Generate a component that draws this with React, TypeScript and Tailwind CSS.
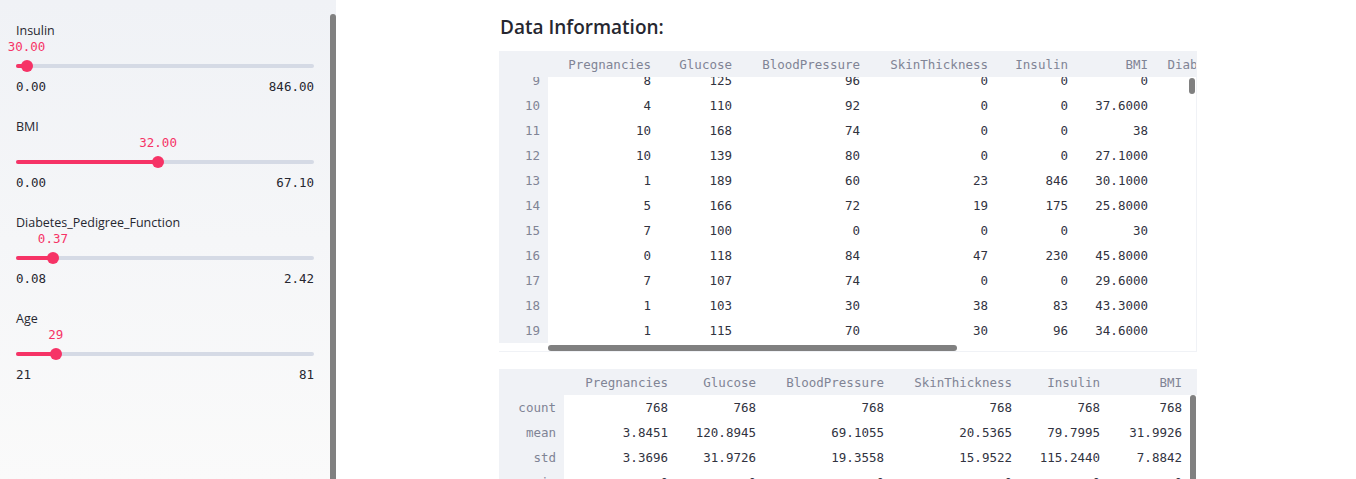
import React from 'react'

const sans = { fontFamily: '"Open Sans", "Noto Sans", sans-serif' }
const mono = { fontFamily: '"DejaVu Sans Mono", "Liberation Mono", monospace' }

type SliderProps = {
  label: string
  value: string
  min: string
  max: string
  pct: number
}

function Slider({ label, value, min, max, pct }: SliderProps) {
  const left = `${pct * 100}%`
  return (
    <div className="h-[96px] pt-[22px]">
      <div className="text-[12.5px] leading-[18px] text-[#262730]" style={sans}>
        {label}
      </div>
      <div className="relative mt-[-1px] h-[40px]">
        <div
          className="absolute top-0 -translate-x-1/2 text-[12.5px] leading-[16px] text-[#f63366]"
          style={{ ...mono, left }}
        >
          {value}
        </div>
        <div className="absolute left-0 right-0 top-[25px] h-[4px] rounded-full bg-[#d5dae5]" />
        <div
          className="absolute left-0 top-[25px] h-[4px] rounded-full bg-[#f63366]"
          style={{ width: left }}
        />
        <div
          className="absolute top-[21px] h-[12px] w-[12px] -translate-x-1/2 rounded-full bg-[#f63366]"
          style={{ left }}
        />
      </div>
      <div className="flex justify-between text-[12.5px] leading-[16px] text-[#262730]" style={mono}>
        <span>{min}</span>
        <span>{max}</span>
      </div>
    </div>
  )
}

const cols1 = ['Pregnancies', 'Glucose', 'BloodPressure', 'SkinThickness', 'Insulin', 'BMI', 'DiabetesPedigreeFunction']
const widths1 = [49, 111, 81, 128, 128, 80, 80, 200]
const rows1: (string | number)[][] = [
  [9, 8, 125, 96, 0, 0, '0', '2.2880'],
  [10, 4, 110, 92, 0, 0, '37.6000', '0.1910'],
  [11, 10, 168, 74, 0, 0, '38', '0.5370'],
  [12, 10, 139, 80, 0, 0, '27.1000', '1.4410'],
  [13, 1, 189, 60, 23, 846, '30.1000', '0.3980'],
  [14, 5, 166, 72, 19, 175, '25.8000', '0.5870'],
  [15, 7, 100, 0, 0, 0, '30', '0.4840'],
  [16, 0, 118, 84, 47, 230, '45.8000', '0.5510'],
  [17, 7, 107, 74, 0, 0, '29.6000', '0.2540'],
  [18, 1, 103, 30, 38, 83, '43.3000', '0.1830'],
  [19, 1, 115, 70, 30, 96, '34.6000', '0.5290'],
]

const cols2 = ['Pregnancies', 'Glucose', 'BloodPressure', 'SkinThickness', 'Insulin', 'BMI']
const widths2 = [65, 112, 88, 128, 128, 88, 82]
const rows2: string[][] = [
  ['count', '768', '768', '768', '768', '768', '768'],
  ['mean', '3.8451', '120.8945', '69.1055', '20.5365', '79.7995', '31.9926'],
  ['std', '3.3696', '31.9726', '19.3558', '15.9522', '115.2440', '7.8842'],
  ['min', '0', '0', '0', '0', '0', '0'],
]

function Cell({ w, children, index, head }: { w: number; children: React.ReactNode; index?: boolean; head?: boolean }) {
  return (
    <div
      className={`shrink-0 overflow-hidden whitespace-nowrap px-[8px] text-right ${
        index ? 'bg-[#f0f2f6] text-[#808495]' : head ? 'text-[#808495]' : 'text-[#31333f]'
      }`}
      style={{ width: w }}
    >
      {children}
    </div>
  )
}

function HeaderRow({ cols, widths }: { cols: string[]; widths: number[] }) {
  return (
    <div className="flex h-[26px] items-center bg-[#f0f2f6]">
      <Cell w={widths[0]} head>
        {''}
      </Cell>
      {cols.map((c, i) => (
        <Cell key={c} w={widths[i + 1]} head>
          {c}
        </Cell>
      ))}
    </div>
  )
}

export default function App() {
  return (
    <div className="flex h-[479px] w-[1356px] overflow-hidden bg-white text-[12.5px]">
      <aside className="relative h-full w-[336px] shrink-0 bg-gradient-to-b from-[#f0f2f6] to-[#fafafa]">
        <div className="w-[330px] pl-[16px] pr-[16px]">
          <Slider label="Insulin" value="30.00" min="0.00" max="846.00" pct={30 / 846} />
          <Slider label="BMI" value="32.00" min="0.00" max="67.10" pct={32 / 67.1} />
          <Slider label="Diabetes_Pedigree_Function" value="0.37" min="0.08" max="2.42" pct={(0.37 - 0.08) / 2.34} />
          <Slider label="Age" value="29" min="21" max="81" pct={8 / 60} />
        </div>
        <div className="absolute bottom-0 right-0 top-[14px] w-[6px] rounded-t-full bg-[#808080]" />
      </aside>

      <main className="ml-[163px] w-[698px] shrink-0">
        <h3 className="mt-[14px] h-[37px] pl-[1px] text-[19px] font-semibold leading-[26px] text-[#262730]" style={sans}>
          Data Information:
        </h3>

        <div className="relative h-[301px] w-[698px] overflow-hidden border-b border-r border-[#f0f2f6] leading-[25px]" style={mono}>
          <HeaderRow cols={cols1} widths={widths1} />
          <div className="h-[266px] overflow-hidden">
            <div className="-mt-[9px]">
              {rows1.map((r) => (
                <div key={r[0]} className="flex h-[25px] items-center">
                  {r.map((v, i) => (
                    <Cell key={i} w={widths1[i]} index={i === 0}>
                      {v}
                    </Cell>
                  ))}
                </div>
              ))}
            </div>
          </div>
          <div className="absolute left-[49px] top-[294px] h-[6px] w-[409px] rounded-full bg-[#808080]" />
          <div className="absolute right-[1px] top-[27px] h-[16px] w-[6px] rounded-full bg-[#808080]" />
        </div>

        <div className="relative mt-[17px] h-[120px] w-[698px] overflow-hidden leading-[25px]" style={mono}>
          <HeaderRow cols={cols2} widths={widths2} />
          {rows2.map((r) => (
            <div key={r[0]} className="flex h-[25px] items-center">
              {r.map((v, i) => (
                <Cell key={i} w={widths2[i]} index={i === 0}>
                  {v}
                </Cell>
              ))}
            </div>
          ))}
          <div className="absolute bottom-0 right-[1px] top-[26px] w-[6px] rounded-t-full bg-[#808080]" />
        </div>
      </main>
    </div>
  )
}
